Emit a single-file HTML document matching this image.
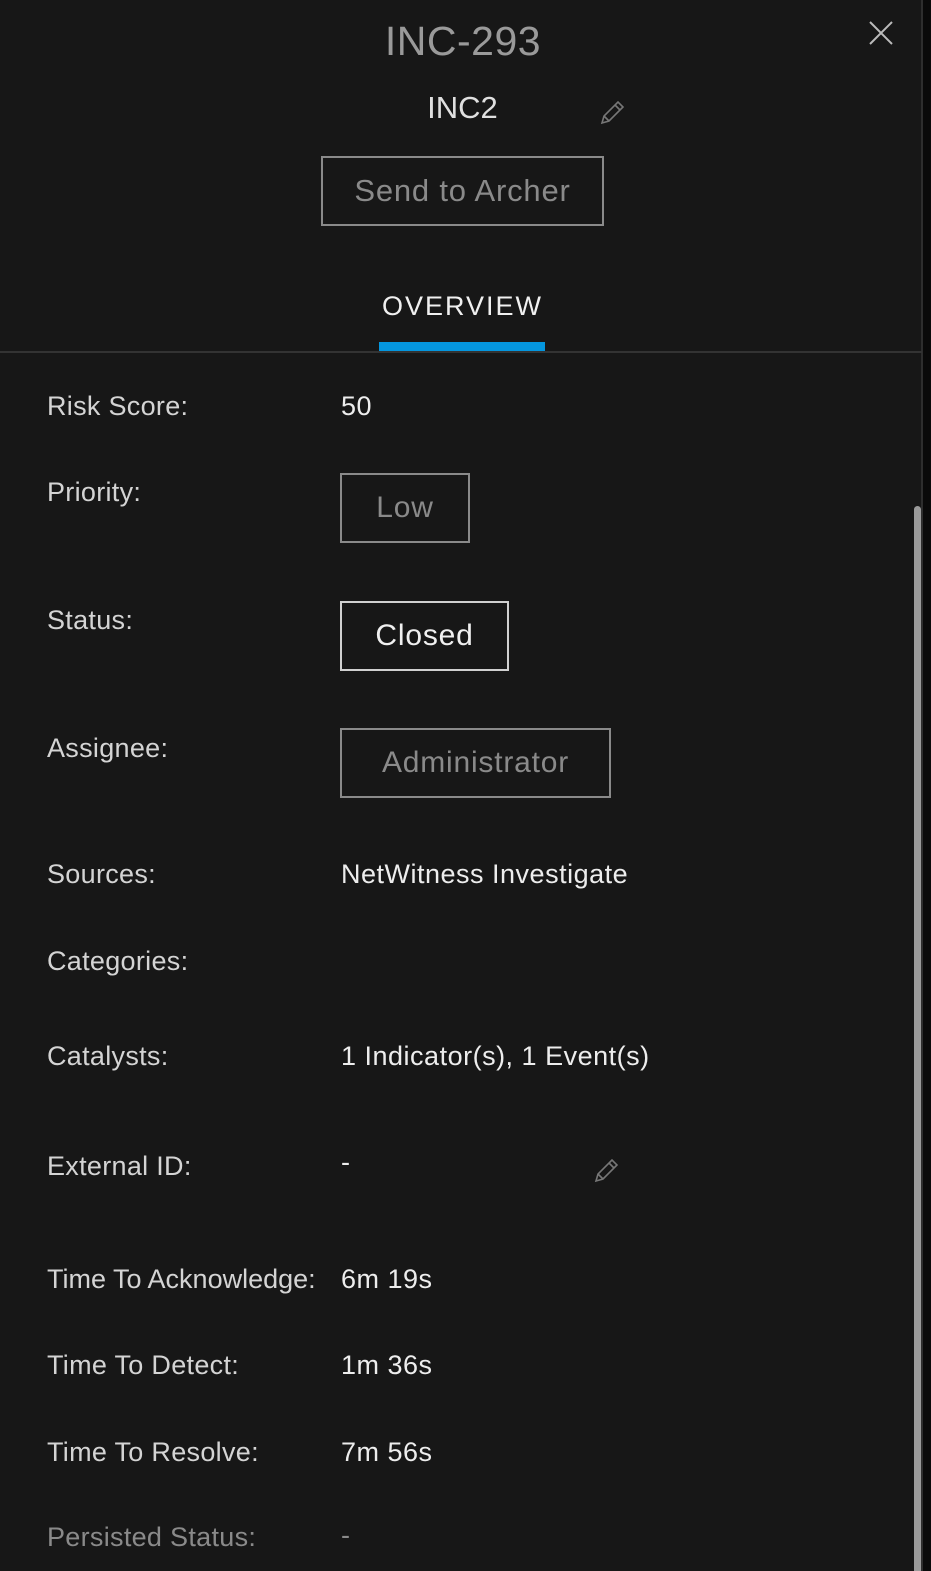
<!DOCTYPE html>
<html><head><style>
body{margin:0;width:931px;height:1571px;background:#171717;position:relative;overflow:hidden;font-family:"Liberation Sans",sans-serif;}
.a{position:absolute;white-space:nowrap}
.l{left:47px;font-size:27px;color:#d4d4d4;letter-spacing:0.3px}
.v{left:341px;font-size:27px;color:#ededed;letter-spacing:0.5px}
.box{position:absolute;border:2px solid #8a8a8a;box-sizing:border-box;font-size:30px;color:#8a8a8a;display:flex;align-items:center;justify-content:center;letter-spacing:0.8px}
</style></head><body>
<div class="a" style="left:0;top:0;width:922px;height:1571px;background:#171717"></div>
<div class="a" style="left:921px;top:0;width:2px;height:1571px;background:#2e2e2e"></div>
<div class="a" style="left:923px;top:0;width:8px;height:1571px;background:#0a0a0a"></div>
<div class="a" style="left:914px;top:506px;width:7px;height:1065px;background:#9a9a9a;border-radius:4px 4px 0 0"></div>
<div class="a" style="left:0;width:926px;top:18px;text-align:center;font-size:41px;color:#9a9a9a;letter-spacing:0.5px">INC-293</div>
<svg class="a" style="left:867px;top:19px" width="28" height="28"><path d="M3 3L25 25M25 3L3 25" stroke="#bbb" stroke-width="2"/></svg>
<div class="a" style="left:0;width:925px;top:90px;text-align:center;font-size:31px;color:#e0e0e0;">INC2</div>
<svg class="a" style="left:599px;top:100px" width="26" height="26"><path d="M3 23L5 16L19 2L24 7L10 21ZM5 16L10 21M16 5L21 10" stroke="#777" stroke-width="1.6" fill="none"/></svg>
<div class="box" style="left:321px;top:156px;width:283px;height:70px;font-size:31px">Send to Archer</div>
<div class="a" style="left:0;width:925px;top:291px;text-align:center;font-size:27px;color:#f0f0f0;letter-spacing:2px">OVERVIEW</div>
<div class="a" style="left:379px;top:342px;width:166px;height:9px;background:#0496de"></div>
<div class="a" style="left:0;top:351px;width:922px;height:2px;background:#333"></div>

<div class="a l" style="top:391px">Risk Score:</div><div class="a v" style="top:391px">50</div>
<div class="a l" style="top:477px">Priority:</div>
<div class="box" style="left:340px;top:473px;width:130px;height:70px">Low</div>
<div class="a l" style="top:605px">Status:</div>
<div class="box" style="left:340px;top:601px;width:169px;height:70px;color:#f0f0f0;border-color:#d0d0d0">Closed</div>
<div class="a l" style="top:733px">Assignee:</div>
<div class="box" style="left:340px;top:728px;width:271px;height:70px">Administrator</div>
<div class="a l" style="top:859px">Sources:</div><div class="a v" style="top:859px">NetWitness Investigate</div>
<div class="a l" style="top:946px">Categories:</div>
<div class="a l" style="top:1041px">Catalysts:</div><div class="a v" style="top:1041px">1 Indicator(s), 1 Event(s)</div>
<div class="a l" style="top:1151px">External ID:</div><div class="a v" style="top:1147px">-</div>
<svg class="a" style="left:593px;top:1158px" width="26" height="26"><path d="M3 23L5 16L19 2L24 7L10 21ZM5 16L10 21M16 5L21 10" stroke="#777" stroke-width="1.6" fill="none"/></svg>
<div class="a l" style="top:1264px;letter-spacing:0">Time To Acknowledge:</div><div class="a v" style="top:1264px">6m 19s</div>
<div class="a l" style="top:1350px">Time To Detect:</div><div class="a v" style="top:1350px">1m 36s</div>
<div class="a l" style="top:1437px">Time To Resolve:</div><div class="a v" style="top:1437px">7m 56s</div>
<div class="a l" style="top:1522px;color:#8a8a8a">Persisted Status:</div><div class="a v" style="top:1520px;color:#8a8a8a">-</div>
</body></html>
